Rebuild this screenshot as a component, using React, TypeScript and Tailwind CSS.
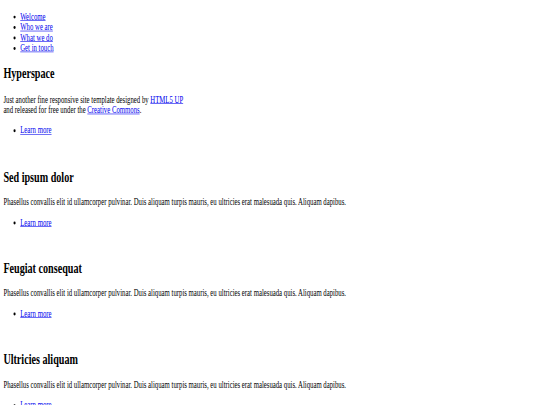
import React from 'react';

const navItems = ['Welcome', 'Who we are', 'What we do', 'Get in touch'];

const sections = [
  { title: 'Sed ipsum dolor', gap: 'mt-[57.5px]' },
  { title: 'Feugiat consequat', gap: 'mt-[56px]' },
  { title: 'Ultricies aliquam', gap: 'mt-[57.5px]' },
];

const body =
  'Phasellus convallis elit id ullamcorper pulvinar. Duis aliquam turpis mauris, eu ultricies erat malesuada quis. Aliquam dapibus.';

const Link: React.FC<{ children: React.ReactNode }> = ({ children }) => (
  <a href="#" className="text-[#0000ee] underline">
    {children}
  </a>
);

const Actions: React.FC = () => (
  <ul className="list-disc pl-[40px] mt-[17px]">
    <li>
      <Link>Learn more</Link>
    </li>
  </ul>
);

const App: React.FC = () => {
  return (
    <div className="w-[540px] h-[405px] overflow-hidden bg-white">
      {/* unstyled page, squashed like the reference */}
      <div
        className="w-[1280px] px-[8px] pt-[19.5px] origin-top-left scale-x-[0.421875] scale-y-[0.58] text-black text-[16px]"
        style={{ fontFamily: '"Liberation Serif", "Times New Roman", serif', lineHeight: 'normal' }}
      >
        <ul className="list-disc pl-[40px]">
          {navItems.map(item => (
            <li key={item}>
              <Link>{item}</Link>
            </li>
          ))}
        </ul>

        <section className="mt-[22.7px]">
          <h2 className="text-[24px] font-bold">Hyperspace</h2>
          <p className="mt-[22px]">
            Just another fine responsive site template designed by <Link>HTML5 UP</Link>
            <br />
            and released for free under the <Link>Creative Commons</Link>.
          </p>
          <Actions />
        </section>

        {sections.map(s => (
          <section key={s.title} className={s.gap}>
            <h2 className="text-[24px] font-bold">{s.title}</h2>
            <p className="mt-[21px]">{body}</p>
            <Actions />
          </section>
        ))}
      </div>
    </div>
  );
};

export default App;
